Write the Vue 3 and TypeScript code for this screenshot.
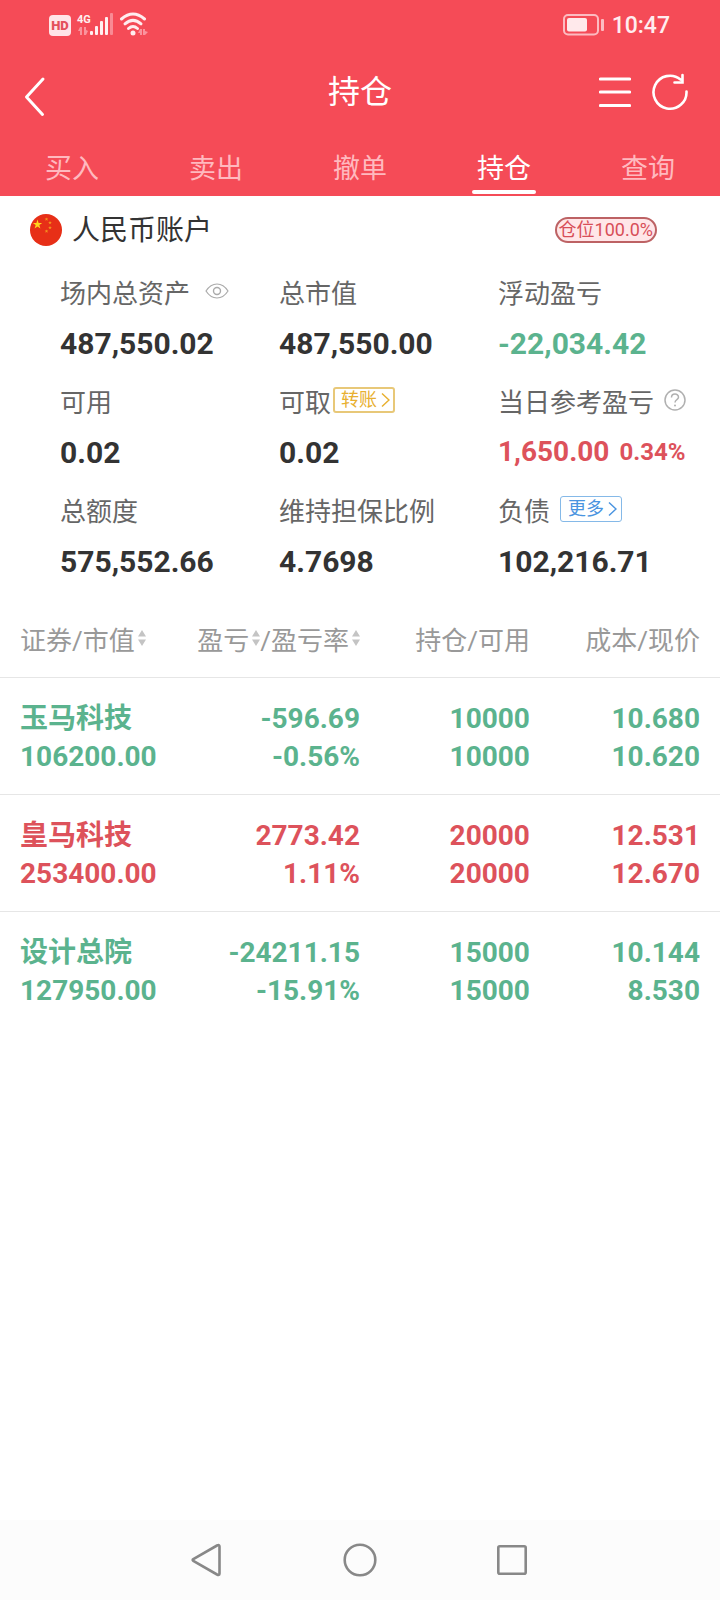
<script setup lang="ts">
import { ref } from 'vue'

interface Position {
  name: string
  marketValue: string
  profit: string
  profitRate: string
  held: string
  available: string
  cost: string
  price: string
  trend: 'up' | 'down'
}

const tabs: string[] = ['买入', '卖出', '撤单', '持仓', '查询']
const activeTab = ref<string>('持仓')

const positions: Position[] = [
  { name: '玉马科技', marketValue: '106200.00', profit: '-596.69', profitRate: '-0.56%', held: '10000', available: '10000', cost: '10.680', price: '10.620', trend: 'down' },
  { name: '皇马科技', marketValue: '253400.00', profit: '2773.42', profitRate: '1.11%', held: '20000', available: '20000', cost: '12.531', price: '12.670', trend: 'up' },
  { name: '设计总院', marketValue: '127950.00', profit: '-24211.15', profitRate: '-15.91%', held: '15000', available: '15000', cost: '10.144', price: '8.530', trend: 'down' },
]
</script>

<template>
  <div class="page">
    <header class="top">
      <div class="status">
        <svg class="status-left" width="104" height="28" viewBox="0 0 104 28" aria-hidden="true">
          <rect x="1" y="4" width="22" height="21" rx="4" fill="#ffe4e7" />
          <text x="12" y="19" text-anchor="middle" font-size="13" class="hd">HD</text>
          <text x="29" y="12" font-size="11" class="net">4G</text>
          <path d="M32 16h2v8h-2v-4h-2zM36 16h2v3l2 1-2 4h-2z" fill="#fa939d" />
          <g fill="#fff0f1">
            <rect x="42" y="20" width="3" height="4" rx="1" />
            <rect x="47" y="15" width="3" height="9" rx="1" />
            <rect x="52" y="10" width="3" height="14" rx="1" />
            <rect x="57" y="6" width="3" height="18" rx="1" />
          </g>
          <rect x="62" y="2" width="3" height="22" rx="1" fill="#f98a94" />
          <g fill="none" stroke="#ffedef" stroke-width="3" stroke-linecap="round">
            <path d="M73.500 8Q85 -2 96.500 8" />
            <path d="M77 12.800Q85 6 93 12.800" />
            <path d="M80.500 17.500Q85 13.500 89.500 17.500" />
          </g>
          <circle cx="85" cy="22" r="2.500" fill="#ffedef" />
          <path d="M92 18h2v6h-2v-2h-2zM95 18h2v2l3 1-3 3h-2z" fill="#fa939d" />
        </svg>
        <div class="status-right">
          <svg width="42" height="22" viewBox="0 0 42 22" aria-hidden="true">
            <rect x="1" y="1" width="34" height="19.500" rx="4" fill="none" stroke="#fcbbc1" stroke-width="2" />
            <rect x="4" y="4" width="20" height="13.500" rx="2" fill="#ffe9eb" />
            <rect x="38" y="5" width="3" height="12" rx="1" fill="#fcbbc1" />
          </svg>
          <span>10:47</span>
        </div>
      </div>
      <div class="title-row">
        <button type="button" class="icon-btn back" aria-label="返回">
          <svg width="22" height="42" viewBox="0 0 22 42"><path d="M19 3 2.500 21 18.500 38.500" fill="none" stroke="#fff" stroke-width="3" stroke-linecap="round" stroke-linejoin="round" /></svg>
        </button>
        <h1>持仓</h1>
        <div class="actions">
          <button type="button" class="icon-btn" aria-label="菜单">
            <svg width="32" height="38" viewBox="0 0 32 38"><path d="M1.500 6h29M1.500 19h29M1.500 32.500h29" stroke="#fff" stroke-width="3.200" stroke-linecap="round" /></svg>
          </button>
          <button type="button" class="icon-btn" aria-label="刷新">
            <svg width="38" height="38" viewBox="0 0 38 38"><path d="M35.500 18.500A16.500 16.500 0 1 1 29.500 6.500M31.500 2v7.500H23.500" fill="none" stroke="#fff" stroke-width="2.600" stroke-linecap="round" /></svg>
          </button>
        </div>
      </div>
      <nav class="tabs">
        <button v-for="tab in tabs" :key="tab" type="button" :class="['tab', { active: tab === activeTab }]" @click="activeTab = tab">{{ tab }}</button>
      </nav>
    </header>

    <main>
      <section class="account">
        <svg width="32" height="32" viewBox="0 0 32 32" aria-hidden="true">
          <circle cx="16" cy="16" r="16" fill="#e72f17" />
          <path d="M7.500 5.500 8.600 8.900h3.600L9.300 11l1.100 3.500-2.900-2.100-2.900 2.100L5.700 11 2.800 8.900h3.600z" fill="#ffd51c" />
          <g fill="#f3901e">
            <path d="M16.500 3.500 17 4.500h1.300l-1 .9.400 1.300-1.200-.8-1.200.8.400-1.300-1-.9H16z" />
            <path d="M20 7 20.500 8h1.300l-1 .9.400 1.300-1.200-.8-1.200.8.400-1.300-1-.9h1.300z" />
            <path d="M20 12 20.500 13h1.300l-1 .9.400 1.300-1.200-.8-1.200.8.400-1.300-1-.9h1.300z" />
            <path d="M16.500 15.500 17 16.500h1.300l-1 .9.400 1.300-1.200-.8-1.200.8.400-1.300-1-.9H16z" />
          </g>
        </svg>
        <h2>人民币账户</h2>
        <span class="ratio">仓位100.0%</span>
      </section>

      <dl class="summary">
        <div>
          <dt>场内总资产
            <button type="button" class="icon-btn eye" aria-label="隐藏金额">
              <svg width="24" height="16" viewBox="0 0 24 16" fill="none" stroke="#aaa"><path d="M1 8Q5.500 1 12 1T23 8Q18.500 15 12 15T1 8z" stroke-width="1.200" /><circle cx="12" cy="8" r="3.500" stroke-width="1.400" /></svg>
            </button>
          </dt>
          <dd>487,550.02</dd>
        </div>
        <div><dt>总市值</dt><dd>487,550.00</dd></div>
        <div><dt>浮动盈亏</dt><dd class="down">-22,034.42</dd></div>
        <div><dt>可用</dt><dd>0.02</dd></div>
        <div>
          <dt>可取<button type="button" class="chip gold">转账<svg width="9" height="16" viewBox="0 0 9 16"><path d="M1 1.500 8 8 1 14.500" fill="none" stroke="currentColor" stroke-width="1.500" /></svg></button></dt>
          <dd>0.02</dd>
        </div>
        <div>
          <dt>当日参考盈亏
            <button type="button" class="icon-btn help" aria-label="说明">
              <svg width="22" height="22" viewBox="0 0 22 22" fill="none" stroke="#b0b0b0"><circle cx="11" cy="11" r="10" stroke-width="1.500" /><path d="M7.500 8.500C7.500 3.800 14.500 3.900 14.500 8.300 14.500 10.800 11 10.500 11 13.500" stroke-width="1.500" /><circle cx="11" cy="16.500" r="1" fill="#b0b0b0" stroke="none" /></svg>
            </button>
          </dt>
          <dd class="up day">1,650.00<small>0.34%</small></dd>
        </div>
        <div><dt>总额度</dt><dd>575,552.66</dd></div>
        <div><dt>维持担保比例</dt><dd>4.7698</dd></div>
        <div>
          <dt>负债<button type="button" class="chip blue">更多<svg width="9" height="16" viewBox="0 0 9 16"><path d="M1 1.500 8 8 1 14.500" fill="none" stroke="currentColor" stroke-width="1.500" /></svg></button></dt>
          <dd>102,216.71</dd>
        </div>
      </dl>

      <table class="positions">
        <colgroup><col class="c1" /><col class="c2" /><col class="c3" /><col class="c4" /></colgroup>
        <thead>
          <tr>
            <th scope="col">证券/<button type="button" class="sort">市值<svg width="8" height="16" viewBox="0 0 8 16"><path d="M4 0 8 6.500H0zM4 16 8 9.500H0z" fill="#c4c4c4" /></svg></button></th>
            <th scope="col"><button type="button" class="sort">盈亏<svg width="8" height="16" viewBox="0 0 8 16"><path d="M4 0 8 6.500H0zM4 16 8 9.500H0z" fill="#c4c4c4" /></svg></button>/<button type="button" class="sort">盈亏率<svg width="8" height="16" viewBox="0 0 8 16"><path d="M4 0 8 6.500H0zM4 16 8 9.500H0z" fill="#c4c4c4" /></svg></button></th>
            <th scope="col">持仓/可用</th>
            <th scope="col">成本/现价</th>
          </tr>
        </thead>
        <tbody>
          <tr v-for="p in positions" :key="p.name" :class="p.trend">
            <td><div>{{ p.name }}</div><div>{{ p.marketValue }}</div></td>
            <td><div>{{ p.profit }}</div><div>{{ p.profitRate }}</div></td>
            <td><div>{{ p.held }}</div><div>{{ p.available }}</div></td>
            <td><div>{{ p.cost }}</div><div>{{ p.price }}</div></td>
          </tr>
        </tbody>
      </table>
    </main>

    <nav class="system">
      <button type="button" class="icon-btn" aria-label="系统返回">
        <svg width="36" height="36" viewBox="0 0 36 36"><path d="M3.300 17.200 27 3.500Q29.500 2.300 29.500 4.500V31.500Q29.500 33.700 27 32.500L3.300 18.800Q2 18 3.300 17.200z" fill="none" stroke="#888" stroke-width="2.600" /></svg>
      </button>
      <button type="button" class="icon-btn" aria-label="主屏幕">
        <svg width="36" height="36" viewBox="0 0 36 36"><circle cx="18" cy="18" r="15.300" fill="none" stroke="#888" stroke-width="2.600" /></svg>
      </button>
      <button type="button" class="icon-btn" aria-label="最近任务">
        <svg width="36" height="36" viewBox="0 0 36 36"><rect x="4.300" y="4.300" width="27.400" height="27.400" rx="1.500" fill="none" stroke="#888" stroke-width="2.600" /></svg>
      </button>
    </nav>
  </div>
</template>

<style>
body {
  margin: 0;
  background: #fff;
}
</style>

<style scoped>
.page {
  min-height: 100vh;
  display: flex;
  flex-direction: column;
  font-family: Roboto, "Noto Sans CJK SC", sans-serif;
  color: #333;
  background: #fff;
}
button {
  font: inherit;
  color: inherit;
  border: 0;
  padding: 0;
  background: none;
}
svg {
  display: block;
  flex: none;
}
h1,
h2,
dl,
dd {
  margin: 0;
}
.icon-btn {
  display: flex;
}
.top {
  background: #f54b57;
  color: #fff;
}
.status {
  display: flex;
  justify-content: space-between;
  align-items: center;
  height: 50px;
  padding: 0 50px 0 48px;
}
.status-right {
  display: flex;
  align-items: center;
  gap: 7px;
  font-size: 23px;
  font-weight: 500;
  color: #ffedef;
}
.hd {
  font-weight: 900;
  fill: #e4505b;
}
.net {
  font-weight: 700;
  fill: #fff0f1;
}
.title-row {
  display: grid;
  grid-template-columns: 1fr auto 1fr;
  align-items: center;
  height: 84px;
  padding: 0 24px;
}
.back {
  justify-self: start;
  padding-top: 10px;
}
h1 {
  font-size: 32px;
  font-weight: 400;
  line-height: 40px;
}
.actions {
  display: flex;
  justify-content: flex-end;
  gap: 20px;
  padding-right: 7px;
}
.tabs {
  display: flex;
  height: 62px;
}
.tab {
  flex: 1;
  display: flex;
  flex-direction: column;
  align-items: center;
  padding-top: 15px;
  font-size: 27px;
  line-height: 40px;
  color: #ffb9bf;
}
.tab.active {
  color: #fff;
}
.tab.active::after {
  content: "";
  width: 64px;
  height: 4px;
  margin-top: 1px;
  border-radius: 2px;
  background: #fff;
}
main {
  flex: 1;
}
.account {
  display: flex;
  align-items: center;
  height: 68px;
  padding: 0 63px 0 30px;
}
h2 {
  padding-bottom: 4px;
  margin-left: 10px;
  font-size: 28px;
  font-weight: 400;
}
.ratio {
  margin-left: auto;
  padding: 0 2px;
  border: 2px solid #bd6264;
  border-radius: 13px;
  background: #ffe6e8;
  color: #d84e58;
  font-size: 18px;
  line-height: 22px;
}
.summary {
  display: grid;
  grid-template-columns: repeat(3, 1fr);
  padding: 4px 3px 4px 60px;
}
.summary > div {
  height: 109px;
}
dt {
  display: flex;
  align-items: center;
  height: 46px;
  margin-bottom: 4px;
  font-size: 26px;
  color: #666;
  white-space: nowrap;
}
.eye {
  margin-left: 15px;
}
.help {
  margin-left: 10px;
}
dd {
  height: 52px;
  font-size: 30px;
  font-weight: 700;
  line-height: 52px;
  white-space: nowrap;
}
.day {
  display: flex;
  align-items: center;
  gap: 10px;
  height: 50px;
  font-size: 28px;
  line-height: 50px;
}
small {
  font-size: 24px;
}
.up {
  color: #dd525b;
}
.down {
  color: #5bb38e;
}
.chip {
  display: flex;
  align-items: center;
  gap: 4px;
  height: 26px;
  padding: 0 3px 0 6px;
  border: 2px solid;
  border-radius: 3px;
  font-size: 18px;
  line-height: 22px;
}
.gold {
  margin-left: 2px;
  border-color: #e8c878;
  color: #e8b030;
}
.blue {
  margin-left: 10px;
  border-width: 1px;
  padding: 0 4px 0 7px;
  border-color: #85b9e8;
  color: #4a94e0;
}
.positions {
  width: 100%;
  border-collapse: collapse;
  table-layout: fixed;
}
.c1,
.c2 {
  width: 25%;
}
.c3 {
  width: 23.6%;
}
th {
  height: 78px;
  padding: 0;
  border-bottom: 1px solid #e6e6e6;
  font-size: 26px;
  font-weight: 400;
  color: #999;
  text-align: right;
  white-space: nowrap;
}
.sort {
  display: inline-flex;
  align-items: center;
  gap: 3px;
}
td {
  padding: 22px 0 18px;
  font-size: 28px;
  font-weight: 700;
  line-height: 38px;
  text-align: right;
  border-bottom: 1px solid #e6e6e6;
}
tbody tr:last-child td {
  border-bottom: 0;
}
th:first-child,
td:first-child {
  padding-left: 20px;
  text-align: left;
}
th:last-child,
td:last-child {
  padding-right: 20px;
}
.system {
  display: flex;
  align-items: center;
  justify-content: center;
  gap: 116px;
  height: 80px;
  background: #fcfcfc;
}
</style>
